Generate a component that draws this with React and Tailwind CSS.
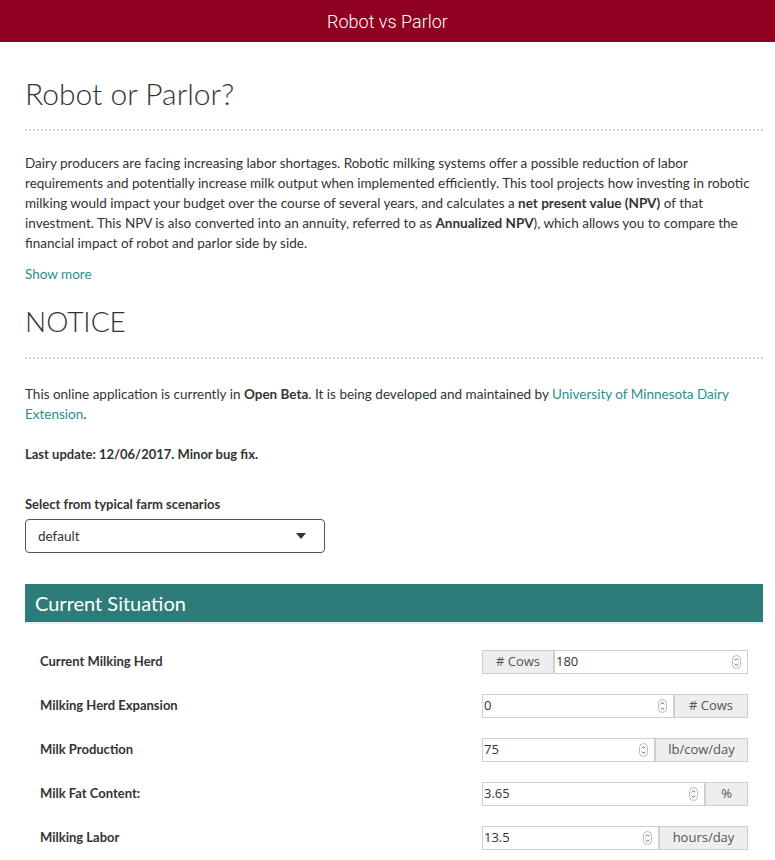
import React from 'react';

const FONT = "font-['Lato','Noto_Sans',sans-serif]";
const INPUT_FONT = "font-['Open_Sans','DejaVu_Sans',sans-serif]";

// Rows of the Current Situation panel
const ROWS = [
  { label: 'Current Milking Herd', value: '180', unit: '# Cows', unitLeft: true, unitW: 'w-[72px]' },
  { label: 'Milking Herd Expansion', value: '0', unit: '# Cows', unitW: 'w-[74px]' },
  { label: 'Milk Production', value: '75', unit: 'lb/cow/day', unitW: 'w-[93px]' },
  { label: 'Milk Fat Content:', value: '3.65', unit: '%', unitW: 'w-[43px]' },
  { label: 'Milking Labor', value: '13.5', unit: 'hours/day', unitW: 'w-[89px]' },
];

const Spinner = () => (
  <svg width="9" height="14" viewBox="0 0 9 14" className="shrink-0">
    <rect x="0.5" y="0.5" width="8" height="13" rx="4" fill="#fff" stroke="#bbb" />
    <path d="M2.8 5.3 L4.5 3.6 L6.2 5.3" fill="none" stroke="#666" strokeWidth="1" />
    <path d="M2.8 8.7 L4.5 10.4 L6.2 8.7" fill="none" stroke="#666" strokeWidth="1" />
  </svg>
);

const NumberField = ({ value }) => (
  <div className="flex-1 flex items-center justify-between h-full bg-white pl-[1px] pr-[6px]">
    <span className="text-[13px] text-[#333]">{value}</span>
    <Spinner />
  </div>
);

const Addon = ({ text, w, left }) => (
  <div
    className={`${w} h-full flex items-center justify-center bg-[#eeeeee] text-[13px] text-[#555] ${left ? 'border-r-2' : 'border-l-2'} border-[#cfcfcf]`}
  >
    {text}
  </div>
);

const Divider = () => <div className="border-b-2 border-dotted border-[#d4d4d4]" />;

export default function App() {
  return (
    <div className={`${FONT} bg-white min-h-screen text-[#333]`}>
      <header className="h-[42px] bg-[#900021] flex items-center justify-center">
        <h1 className="font-['Roboto','Liberation_Sans',sans-serif] text-white text-[18px] font-light">Robot vs Parlor</h1>
      </header>

      <main className="pl-[25px] pr-[12px]">
        <h2 className="text-[30px] font-light text-[#333] pt-[33px] leading-[36px]">Robot or Parlor?</h2>
        <div className="mt-[18px]"><Divider /></div>

        <p className="mt-[22px] text-[13.5px] leading-[20px] text-[#333] whitespace-nowrap">
          Dairy producers are facing increasing labor shortages. Robotic milking systems offer a possible reduction of labor<br />
          requirements and potentially increase milk output when implemented efficiently. This tool projects how investing in robotic<br />
          milking would impact your budget over the course of several years, and calculates a <b>net present value (NPV)</b> of that<br />
          investment. This NPV is also converted into an annuity, referred to as <b>Annualized NPV</b>), which allows you to compare the<br />
          financial impact of robot and parlor side by side.
        </p>
        <a className="block mt-[11px] text-[13.5px] leading-[20px] text-[#2a8f8b]">Show more</a>

        <h2 className="text-[28px] font-light text-[#333] mt-[20px] leading-[34px]">NOTICE</h2>
        <div className="mt-[19px]"><Divider /></div>

        <p className="mt-[25px] text-[13.5px] leading-[20px] whitespace-nowrap">
          This online application is currently in <b>Open Beta</b>. It is being developed and maintained by{' '}
          <a className="text-[#2a8f8b]">University of Minnesota Dairy<br />Extension</a>.
        </p>
        <p className="mt-[20px] text-[13px] leading-[20px] font-bold">Last update: 12/06/2017. Minor bug fix.</p>

        <label className="block mt-[30px] text-[13px] leading-[20px] font-bold">Select from typical farm scenarios</label>
        <div className="mt-[5px] w-[300px] h-[34px] border border-[#555] rounded-[4px] flex items-center justify-between pl-[12px] pr-[18px]">
          <span className="text-[13.5px] text-[#333]">default</span>
          <svg width="10" height="6" viewBox="0 0 10 6"><path d="M0 0 L10 0 L5 6 Z" fill="#333" /></svg>
        </div>

        <section className="mt-[31px]">
          <div className="h-[40px] bg-[#2e7c7a] flex items-center px-[10px] border-b-2 border-[#e6eeee]">
            <span className="text-white text-[20px] font-normal">Current Situation</span>
          </div>
          <div className="pl-[15px] pr-[15px] pt-[26px] flex flex-col gap-[21px]">
            {ROWS.map((r) => (
              <div key={r.label} className="flex items-center justify-between h-[23px]">
                <span className="text-[13px] font-bold text-[#333]">{r.label}</span>
                <div className={`${INPUT_FONT} w-[266px] h-[24px] border border-[#cfcfcf] flex items-center`}>
                  {r.unitLeft && <Addon text={r.unit} w={r.unitW} left />}
                  <NumberField value={r.value} />
                  {!r.unitLeft && <Addon text={r.unit} w={r.unitW} />}
                </div>
              </div>
            ))}
          </div>
        </section>
      </main>
    </div>
  );
}
